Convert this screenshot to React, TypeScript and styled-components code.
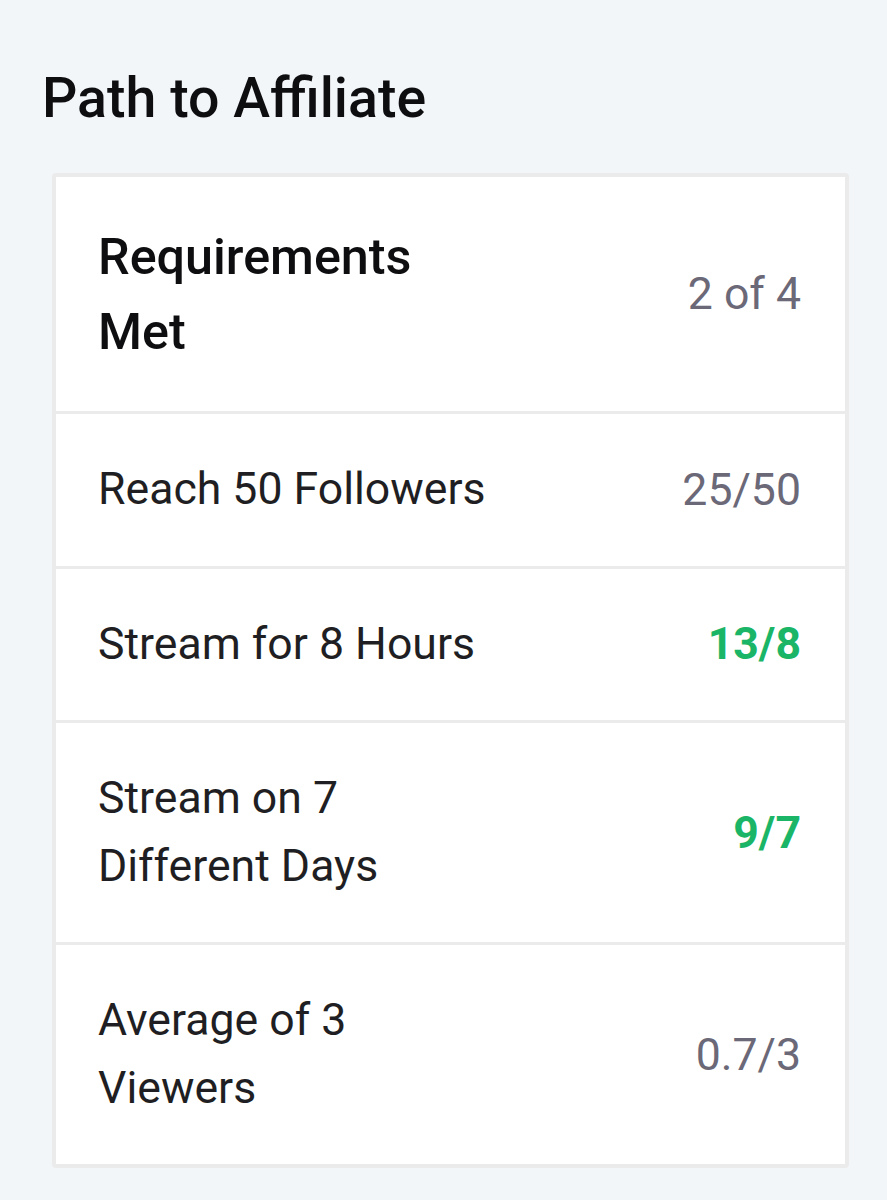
import React from "react";
import styled, { createGlobalStyle } from "styled-components";

const Global = createGlobalStyle`
  html, body {
    margin: 0;
    padding: 0;
    background: #f3f6f9;
    font-family: Roboto, "Noto Sans", Arial, sans-serif;
  }
`;

const Page = styled.div`
  padding: 66px 38px 40px 42px;
  min-height: 1200px;
  box-sizing: border-box;
`;

const Title = styled.h1`
  margin: 0 0 41px 0;
  font-size: 55.5px;
  font-weight: 500;
  line-height: 66px;
  color: #0e0e10;
  letter-spacing: 0;
`;

const Card = styled.div`
  margin-left: 10px;
  background: #ffffff;
  border: 4px solid #ebebec;
  border-radius: 4px;
`;

const Row = styled.div<{ $last?: boolean }>`
  display: flex;
  align-items: center;
  justify-content: space-between;
  padding: 42px 44px 42px 42px;
  border-bottom: ${(p) => (p.$last ? "none" : "3px solid #ebebec")};
`;

const Label = styled.div<{ $strong?: boolean }>`
  max-width: 400px;
  font-size: ${(p) => (p.$strong ? "50.3px" : "44.6px")};
  font-weight: ${(p) => (p.$strong ? 500 : 400)};
  line-height: ${(p) => (p.$strong ? "75px" : "67.5px")};
  color: ${(p) => (p.$strong ? "#0e0e10" : "#1f1f23")};
`;

const Value = styled.div<{ $done?: boolean }>`
  font-size: 44.6px;
  font-weight: ${(p) => (p.$done ? 700 : 400)};
  color: ${(p) => (p.$done ? "#1ab566" : "#6b6878")};
  white-space: nowrap;
`;

const items = [
  { label: "Reach 50 Followers", value: "25/50", done: false },
  { label: "Stream for 8 Hours", value: "13/8", done: true },
  { label: "Stream on 7 Different Days", value: "9/7", done: true },
  { label: "Average of 3 Viewers", value: "0.7/3", done: false },
];

export default function App() {
  return (
    <>
      <Global />
      <Page>
        <Title>Path to Affiliate</Title>
        <Card>
          <Row>
            <Label $strong>Requirements Met</Label>
            <Value>2 of 4</Value>
          </Row>
          {items.map((it, i) => (
            <Row key={it.label} $last={i === items.length - 1}>
              <Label>{it.label}</Label>
              <Value $done={it.done}>{it.value}</Value>
            </Row>
          ))}
        </Card>
      </Page>
    </>
  );
}
